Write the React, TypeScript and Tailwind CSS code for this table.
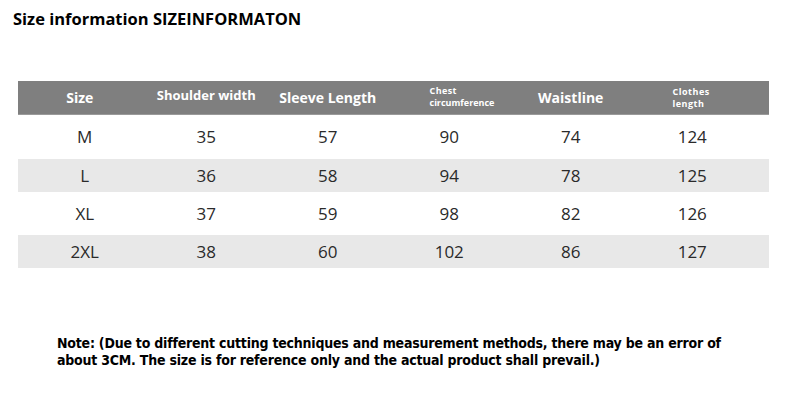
import React from 'react';

const rows = [
  { size: 'M', vals: ['35', '57', '90', '74', '124'], grey: false, h: 'h-[44px]' },
  { size: 'L', vals: ['36', '58', '94', '78', '125'], grey: true, h: 'h-[33px]' },
  { size: 'XL', vals: ['37', '59', '98', '82', '126'], grey: false, h: 'h-[43px]' },
  { size: '2XL', vals: ['38', '60', '102', '86', '127'], grey: true, h: 'h-[33px]' },
];

const App: React.FC = () => {
  return (
    <div className="w-[788px] h-[418px] bg-white relative overflow-hidden font-['Open_Sans',sans-serif]">
      <h1 className="pl-[13px] pt-[8px] text-[16.5px] leading-[22px] font-bold text-black">
        Size information SIZEINFORMATON
      </h1>

      <div className="mt-[51px] ml-[18px] w-[751px]">
        {/* header */}
        <div className="h-[34px] bg-[#7f7f7f] border-b border-[#9a9a9a] pl-[6px] grid grid-cols-[repeat(6,121.5px)] items-center text-white font-bold">
          <div className="text-center text-[14px]"><span className="relative -left-[5px]">Size</span></div>
          <div className="text-center text-[13px] -mt-[3px]">Shoulder width</div>
          <div className="text-center text-[14px]">Sleeve Length</div>
          <div className="pl-[41px] text-[9px] leading-[12px] -mt-[2px]">
            <div className="tracking-[0.4px]">Chest</div>
            <div>circumference</div>
          </div>
          <div className="text-center text-[14px] -mt-[1px]">Waistline</div>
          <div className="pl-[41px] text-[9px] leading-[12px] tracking-[0.5px]">
            <div>Clothes</div>
            <div>length</div>
          </div>
        </div>

        {rows.map((r) => (
          <div
            key={r.size}
            className={`${r.h} ${r.grey ? 'bg-[#e8e8e8]' : 'bg-white'} pl-[6px] grid grid-cols-[repeat(6,121.5px)] items-center text-[17px] text-[#2a2a2a]`}
          >
            <div className="text-center">{r.size}</div>
            {r.vals.map((v, i) => (
              <div key={i} className="text-center">{v}</div>
            ))}
          </div>
        ))}
      </div>

      <p className="absolute left-[57px] top-[335px] text-[14px] leading-[17px] font-bold tracking-[-0.22px] text-black font-['DejaVu_Sans_Condensed','Liberation_Sans_Narrow',sans-serif]">
        Note: (Due to different cutting techniques and measurement methods, there may be an error of
        <br />
        about 3CM. The size is for reference only and the actual product shall prevail.)
      </p>
    </div>
  );
};

export default App;
